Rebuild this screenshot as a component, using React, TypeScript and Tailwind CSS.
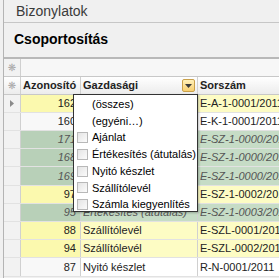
import React from "react";

type Row = { id: string; g: string; s: string; c: "y" | "w" | "g"; sel?: boolean };

const rows: Row[] = [
  { id: "162", g: "Ajánlat", s: "E-A-1-0001/2011", c: "y", sel: true },
  { id: "160", g: "Ajánlat", s: "E-K-1-0001/2011", c: "w" },
  { id: "171", g: "Értékesítés (átutalás)", s: "E-SZ-1-0000/2011", c: "g" },
  { id: "168", g: "Értékesítés (átutalás)", s: "E-SZ-1-0000/2011", c: "g" },
  { id: "169", g: "Értékesítés (átutalás)", s: "E-SZ-1-0000/2011", c: "g" },
  { id: "97", g: "Szállítólevél", s: "E-SZ-1-0002/2011", c: "y" },
  { id: "95", g: "Értékesítés (átutalás)", s: "E-SZ-1-0003/2011", c: "g" },
  { id: "88", g: "Szállítólevél", s: "E-SZL-0001/2011", c: "y" },
  { id: "94", g: "Szállítólevél", s: "E-SZL-0002/2011", c: "y" },
  { id: "87", g: "Nyitó készlet", s: "R-N-0001/2011", c: "w" },
];

const idBg = { y: "bg-[#fbf9ae]", w: "bg-[#f8f8f8]", g: "bg-[#b8d0b8]" };
const cellBg = { y: "bg-[#fdfcc4]", w: "bg-[#ffffff]", g: "bg-[#c6dcc6]" };

const items: { label: string; box: boolean }[] = [
  { label: "(összes)", box: false },
  { label: "(egyéni…)", box: false },
  { label: "Ajánlat", box: true },
  { label: "Értékesítés (átutalás)", box: true },
  { label: "Nyitó készlet", box: true },
  { label: "Szállítólevél", box: true },
  { label: "Számla kiegyenlítés", box: true },
];

export default function App() {
  return (
    <div
      className="relative w-[279px] h-[278px] overflow-hidden bg-[#f0f0f0] text-[#222]"
      style={{ fontFamily: "'Liberation Sans', Arial, sans-serif" }}
    >
      <div className="ml-[3px] h-full border-l border-[#b4b4b4] flex flex-col">
        <div className="h-[23px] shrink-0 border-b border-[#c6c6c6] flex items-center pl-[12px] text-[14px] text-[#3a3a3a]">
          Bizonylatok
        </div>
        <div className="h-[34px] shrink-0 flex items-center pl-[10px] pb-[2px] text-[14px] font-bold text-black">
          Csoportosítás
        </div>
        <div className="h-[2px] shrink-0 bg-[#b8b8b8]" />
        {/* group panel */}
        <div className="h-[18px] shrink-0 flex border-b border-[#c8c8c8] bg-[#f7f7f7]">
          <div
            className="w-[17px] border-r border-[#d0d0d0] bg-[#f2f2f2] flex items-center justify-center text-[10px] text-[#a8a8a8]"
            style={{ fontFamily: "'DejaVu Sans', sans-serif" }}
          >
            ❋
          </div>
          <div className="flex-1" />
        </div>
        {/* header */}
        <div className="h-[18px] shrink-0 flex border-b border-[#c8c8c8] bg-gradient-to-b from-[#ffffff] to-[#ececec] text-[11px] font-bold">
          <div
            className="w-[17px] shrink-0 border-r border-[#d0d0d0] flex items-center justify-center text-[10px] font-normal text-[#a8a8a8]"
            style={{ fontFamily: "'DejaVu Sans', sans-serif" }}
          >
            ❋
          </div>
          <div className="w-[60px] shrink-0 border-r border-[#d0d0d0] flex items-center pl-[2px]">
            Azonosító
          </div>
          <div className="w-[117px] shrink-0 border-r border-[#d0d0d0] flex items-center pl-[2px] justify-between pr-[2px]">
            <span>Gazdasági</span>
            <span className="w-[13px] h-[13px] rounded-[2px] border border-[#c9a04a] bg-gradient-to-b from-[#fff0b8] to-[#f7cf70] flex items-center justify-center">
              <svg width="7" height="4" viewBox="0 0 7 4">
                <path d="M0 0 H7 L3.5 4 Z" fill="#3a3a3a" />
              </svg>
            </span>
          </div>
          <div className="flex-1 flex items-center pl-[2px] whitespace-nowrap">Sorszám</div>
        </div>
        {/* rows */}
        {rows.map((r, i) => (
          <div
            key={i}
            className={`${i % 5 === 4 ? "h-[19px]" : "h-[18px]"} shrink-0 flex text-[11px] whitespace-nowrap border-b border-[#e2e2e2] ${
              r.c === "g" ? "italic text-[#555]" : "text-[#222]"
            }`}
          >
            <div className="w-[17px] shrink-0 border-r border-[#d0d0d0] bg-[#f2f2f2] flex items-center justify-center">
              {r.sel ? (
                <svg width="4" height="7" viewBox="0 0 4 7">
                  <path d="M0 0 L4 3.5 L0 7 Z" fill="#8a8a8a" />
                </svg>
              ) : null}
            </div>
            <div className={`w-[60px] shrink-0 border-r border-[#d0d0d0] flex items-center justify-end pr-[4px] ${idBg[r.c]}`}>
              {r.id}
            </div>
            <div className={`w-[117px] shrink-0 border-r border-[#d0d0d0] flex items-center pl-[2px] overflow-hidden ${cellBg[r.c]}`}>
              {r.g}
            </div>
            <div className={`flex-1 flex items-center pl-[2px] overflow-hidden ${cellBg[r.c]}`}>{r.s}</div>
          </div>
        ))}
      </div>

      {/* filter popup */}
      <div className="absolute left-[73px] top-[94px] w-[125px] h-[118px] bg-white border border-[#333] shadow-[1px_1px_2px_rgba(0,0,0,0.25)] pt-[1px] text-[11px] text-black">
        {items.map((it, i) => (
          <div key={i} className="h-[16.7px] flex items-center whitespace-nowrap">
            <div className="w-[18px] shrink-0 flex items-center justify-end pr-[4px]">
              {it.box ? (
                <span className="block w-[11px] h-[11px] border border-[#b8b8b8] bg-gradient-to-br from-[#e4e4e4] to-[#fbfbfb]" />
              ) : null}
            </div>
            <span>{it.label}</span>
          </div>
        ))}
      </div>
    </div>
  );
}
